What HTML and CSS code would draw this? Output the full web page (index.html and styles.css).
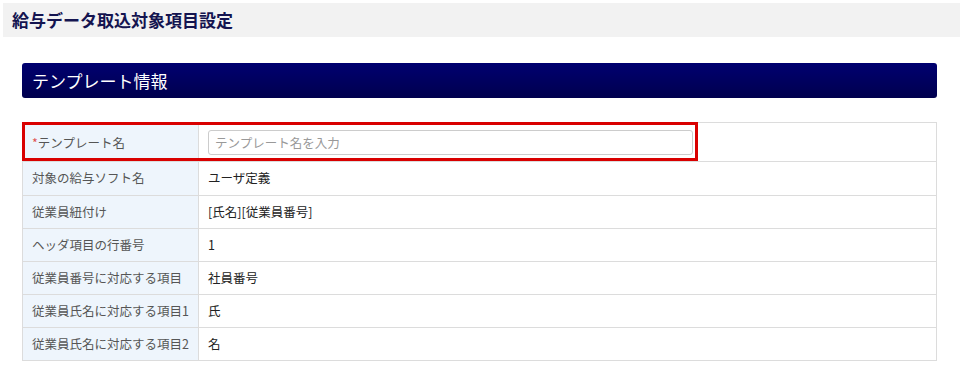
FILE: index.html
```html
<!DOCTYPE html>
<html lang="ja">
<head>
<meta charset="utf-8">
<link rel="stylesheet" href="styles.css">
</head>
<body>
<div class="page-title">給与データ取込対象項目設定</div>
<div class="section">
  <div class="section-head">テンプレート情報</div>
  <div class="table-wrap">
    <table class="info">
      <tr class="row-input">
        <th><span class="req">*</span>テンプレート名</th>
        <td><input class="text-input" type="text" placeholder="テンプレート名を入力"></td>
      </tr>
      <tr class="row-second"><th>対象の給与ソフト名</th><td>ユーザ定義</td></tr>
      <tr><th>従業員紐付け</th><td>[氏名][従業員番号]</td></tr>
      <tr><th>ヘッダ項目の行番号</th><td>1</td></tr>
      <tr><th>従業員番号に対応する項目</th><td>社員番号</td></tr>
      <tr><th>従業員氏名に対応する項目1</th><td>氏</td></tr>
      <tr><th>従業員氏名に対応する項目2</th><td>名</td></tr>
    </table>
    <div class="highlight"></div>
  </div>
</div>
</body>
</html>
```
FILE: styles.css
```css
* { box-sizing: border-box; }
body {
  margin: 0;
  background: #fff;
  font-family: "Noto Sans CJK JP", "Noto Sans", sans-serif;
  color: #222;
}
.page-title {
  margin: 3px 0 0 3px;
  height: 34px;
  background: #f2f2f2;
  padding-left: 9px;
  padding-bottom: 1px;
  display: flex;
  align-items: center;
  font-size: 17px;
  font-weight: bold;
  color: #141450;
}
.section {
  padding: 26px 23px 0 22px;
}
.section-head {
  height: 35px;
  border-radius: 3px;
  background: linear-gradient(#000070, #00004e);
  color: #fff;
  font-size: 17px;
  display: flex;
  align-items: center;
  padding-left: 10px;
}
.table-wrap {
  position: relative;
  margin-top: 24px;
}
.info {
  width: 100%;
  border-collapse: collapse;
  font-size: 12.5px;
}
.info th, .info td {
  border: 1px solid #dcdcdc;
  height: 33px;
  padding: 0 9px 2px;
  text-align: left;
  vertical-align: middle;
}
.info th {
  width: 176px;
  background: #eef5fc;
  font-weight: normal;
  color: #555;
}
.info td {
  color: #222;
}
.row-input th, .row-input td { height: 39px; padding-bottom: 0; }
.row-second th, .row-second td { height: 34px; }
.req { color: #e05050; }
.text-input {
  display: block;
  width: 485px;
  height: 25px;
  border: 1px solid #ccc;
  border-radius: 3px;
  padding: 0 6px;
  font-family: inherit;
  font-size: 12.5px;
  color: #222;
}
.text-input::placeholder { color: #999; }
.highlight {
  position: absolute;
  left: 0;
  top: 0;
  width: 676px;
  height: 39px;
  border: 3px solid #d90000;
  pointer-events: none;
}
```
